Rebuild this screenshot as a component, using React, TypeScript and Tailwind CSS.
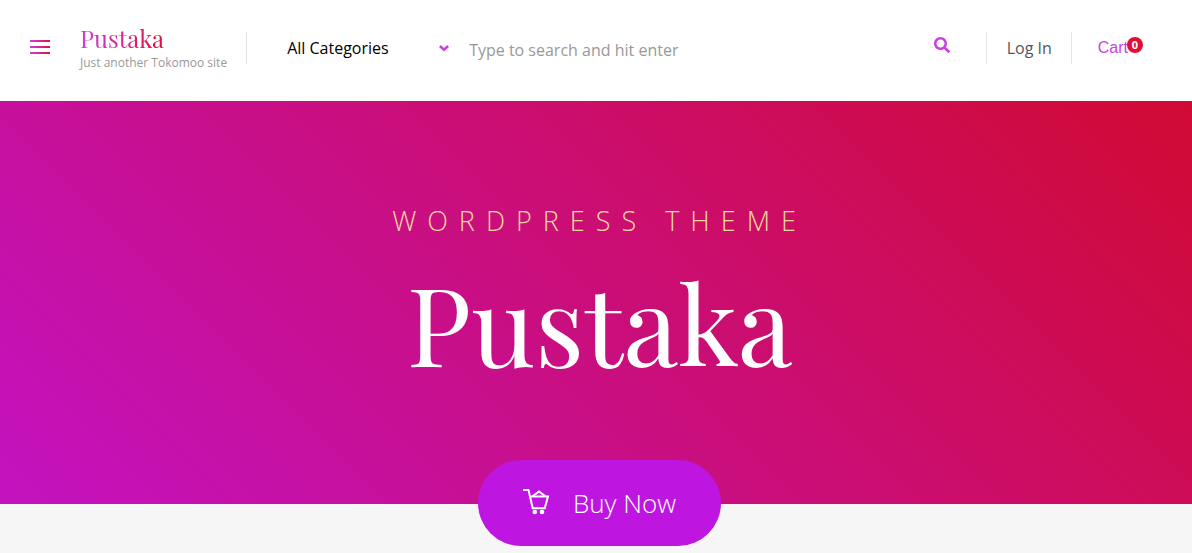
import React from 'react';
import { FaSearch } from 'react-icons/fa';

const BasketIcon: React.FC = () => (
  <svg width="26" height="26" viewBox="0 0 26 26" fill="none" stroke="currentColor" strokeWidth="2" aria-hidden="true">
    <path d="M0 1h5.5l4.2 18.2h12L25 7.5H7" />
    <path d="M9.5 7.2L16 2.6l6.5 4.6" />
    <circle cx="11.8" cy="23" r="2.3" fill="currentColor" stroke="none" />
    <circle cx="19" cy="23" r="2.3" fill="currentColor" stroke="none" />
  </svg>
);

const ChevronIcon: React.FC = () => (
  <svg width="10" height="7" viewBox="0 0 10 7" fill="none" stroke="#cb3fe3" strokeWidth="2.6" aria-hidden="true">
    <path d="M0.9 1L5 4.8 9.1 1" />
  </svg>
);

const Header: React.FC = () => {
  return (
    <header className="flex h-[101px] items-start bg-white pl-[30px] pr-[49px] pt-6">
      <button type="button" aria-label="Open menu" className="mt-4 flex w-5 shrink-0 flex-col gap-1">
        <span className="h-0.5 w-full bg-[linear-gradient(90deg,#cb3fe3,#e00f36)]"></span>
        <span className="h-0.5 w-full bg-[linear-gradient(90deg,#cb3fe3,#e00f36)]"></span>
        <span className="h-0.5 w-full bg-[linear-gradient(90deg,#cb3fe3,#e00f36)]"></span>
      </button>

      <div className="ml-[30px] shrink-0 pr-[19px]">
        <a
          href="#"
          className="block w-fit bg-[linear-gradient(90deg,#cb3fe3,#e00f36)] bg-clip-text font-['Playfair_Display','Liberation_Serif',serif] text-2xl leading-7 text-transparent"
        >
          Pustaka
        </a>
        <p className="mt-px whitespace-nowrap text-xs leading-5 text-[#999999]">Just another Tokomoo site</p>
      </div>

      <form className="mt-2 flex h-8 min-w-0 flex-1 items-center border-l border-[#e5e5e5] pl-10">
        <div className="grid w-[162px] shrink-0 grid-cols-1 items-center">
          <select
            aria-label="Category"
            className="col-start-1 row-start-1 w-full appearance-none bg-transparent text-base leading-8 text-black outline-none"
          >
            <option>All Categories</option>
          </select>
          <span className="pointer-events-none col-start-1 row-start-1 justify-self-end">
            <ChevronIcon />
          </span>
        </div>
        <input
          type="search"
          aria-label="Search"
          placeholder="Type to search and hit enter"
          className="ml-5 mt-1 h-8 min-w-0 flex-1 bg-transparent text-base outline-none placeholder:text-[#999999]"
        />
        <button type="submit" aria-label="Search" className="mr-9 pb-1.5 text-[#cb3fe3]">
          <FaSearch size={16} />
        </button>
      </form>

      <nav className="mt-2 flex h-8 shrink-0 items-center">
        <a href="#" className="border-x border-[#e5e5e5] pl-5 pr-[19px] text-base leading-8 text-[#555555]">
          Log In
        </a>
        <a href="#" className="ml-[26px] flex items-center font-['Liberation_Sans',sans-serif] text-base leading-8 text-[#cb3fe3]">
          Cart
          <span className="-ml-px mb-1.5 flex size-4 items-center justify-center rounded-full bg-[#e00f36] font-['Open_Sans',sans-serif] text-[11px] font-bold leading-4 text-white">
            0
          </span>
        </a>
      </nav>
    </header>
  );
};

const Hero: React.FC = () => {
  return (
    <section className="flex h-[403px] flex-col items-center bg-[linear-gradient(45deg,#c312c0,#d10a34)] pl-[7px] pt-[99px] text-center">
      <p className="text-[27px] font-light uppercase leading-[42px] tracking-[11px] text-[#fbd7a0]">WordPress Theme</p>
      <h1 className="mt-2.5 font-['Playfair_Display','Liberation_Serif',serif] text-[110px] leading-[140px] text-white">
        Pustaka
      </h1>
      <a
        href="#"
        className="mt-[68px] flex h-[86px] shrink-0 items-center gap-6 rounded-full bg-[#bf15e0] pb-0.5 pl-[45px] pr-[45px] text-[26px] font-light text-white"
      >
        <BasketIcon />
        <span className="pt-0.5">Buy Now</span>
      </a>
    </section>
  );
};

const App: React.FC = () => {
  return (
    <div className="min-h-screen bg-[#f6f6f6] font-['Open_Sans',sans-serif]">
      <Header />
      <Hero />
    </div>
  );
};

export default App;
